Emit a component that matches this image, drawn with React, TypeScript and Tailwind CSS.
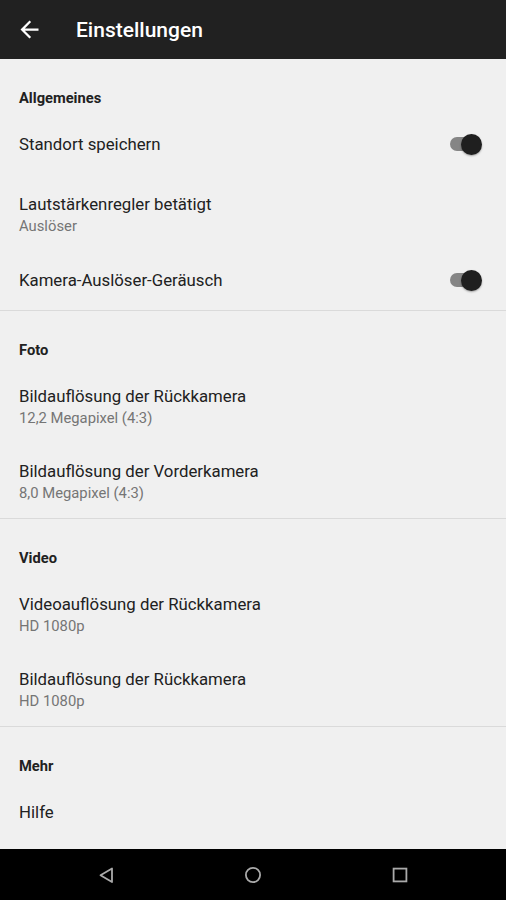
import React from "react";

function Toggle() {
  return (
    <div className="relative w-[32px] h-[21px] shrink-0">
      <div className="absolute left-0 top-[3.5px] w-[30px] h-[14px] rounded-full bg-[#858585]" />
      <div className="absolute right-0 top-0 w-[21px] h-[21px] rounded-full bg-[#1f1f1f] shadow-[0_1px_2px_rgba(0,0,0,0.35)]" />
    </div>
  );
}

function Label({ text, first }: { text: string; first?: boolean }) {
  return (
    <div
      className={
        "pl-[19px] pt-[29px] pb-[8px] text-[14.7px] leading-[20px] font-bold text-[#212121] " +
        (first ? "" : "border-t border-[#dadada]")
      }
    >
      {text}
    </div>
  );
}

function Item({
  title,
  sub,
  h,
  toggle,
}: {
  title: string;
  sub?: string;
  h: string;
  toggle?: boolean;
}) {
  return (
    <div className={"pl-[19px] pr-[24px] pt-[17px] " + h}>
      <div className="flex items-center justify-between">
        <div className="text-[16.8px] leading-[22px] text-[#212121]">{title}</div>
        {toggle ? <Toggle /> : null}
      </div>
      {sub ? (
        <div className="text-[14.8px] leading-[22px] text-[#757575]">{sub}</div>
      ) : null}
    </div>
  );
}

export default function App() {
  return (
    <div className="w-[506px] h-[900px] bg-[#f0f0f0] flex flex-col font-['Roboto',sans-serif] overflow-hidden">
      <div className="h-[59px] shrink-0 bg-[#212121] flex items-center">
        <div className="w-[76px] pl-[16px] flex items-center">
          <svg width="27" height="27" viewBox="0 0 24 24" fill="#ffffff">
            <path d="M20 11H7.83l5.59-5.59L12 4l-8 8 8 8 1.41-1.41L7.83 13H20v-2z" />
          </svg>
        </div>
        <div className="text-[21px] leading-[28px] font-medium text-white">Einstellungen</div>
      </div>

      <div className="flex-1 flex flex-col">
        <Label text="Allgemeines" first />
        <Item title="Standort speichern" h="h-[60px]" toggle />
        <Item title="Lautstärkenregler betätigt" sub="Auslöser" h="h-[76px]" />
        <Item title="Kamera-Auslöser-Geräusch" h="h-[58px]" toggle />

        <Label text="Foto" />
        <Item title="Bildauflösung der Rückkamera" sub="12,2 Megapixel (4:3)" h="h-[75px]" />
        <Item title="Bildauflösung der Vorderkamera" sub="8,0 Megapixel (4:3)" h="h-[75px]" />

        <Label text="Video" />
        <Item title="Videoauflösung der Rückkamera" sub="HD 1080p" h="h-[75px]" />
        <Item title="Bildauflösung der Rückkamera" sub="HD 1080p" h="h-[75px]" />

        <Label text="Mehr" />
        <Item title="Hilfe" h="h-[60px]" />
      </div>

      <div className="h-[51px] shrink-0 bg-black flex justify-center items-center">
        <div className="w-[147px] flex justify-center">
          <svg width="20" height="20" viewBox="0 0 20 20" fill="none" stroke="#aaaaaa" strokeWidth="1.8" strokeLinejoin="round">
            <polygon points="16,3.5 16,17 4.5,10.2" />
          </svg>
        </div>
        <div className="w-[147px] flex justify-center">
          <svg width="20" height="20" viewBox="0 0 20 20" fill="none" stroke="#aaaaaa" strokeWidth="1.8">
            <circle cx="10" cy="10" r="7.1" />
          </svg>
        </div>
        <div className="w-[147px] flex justify-center">
          <svg width="20" height="20" viewBox="0 0 20 20" fill="none" stroke="#aaaaaa" strokeWidth="1.8">
            <rect x="3.6" y="3.6" width="12.8" height="12.8" />
          </svg>
        </div>
      </div>
    </div>
  );
}
